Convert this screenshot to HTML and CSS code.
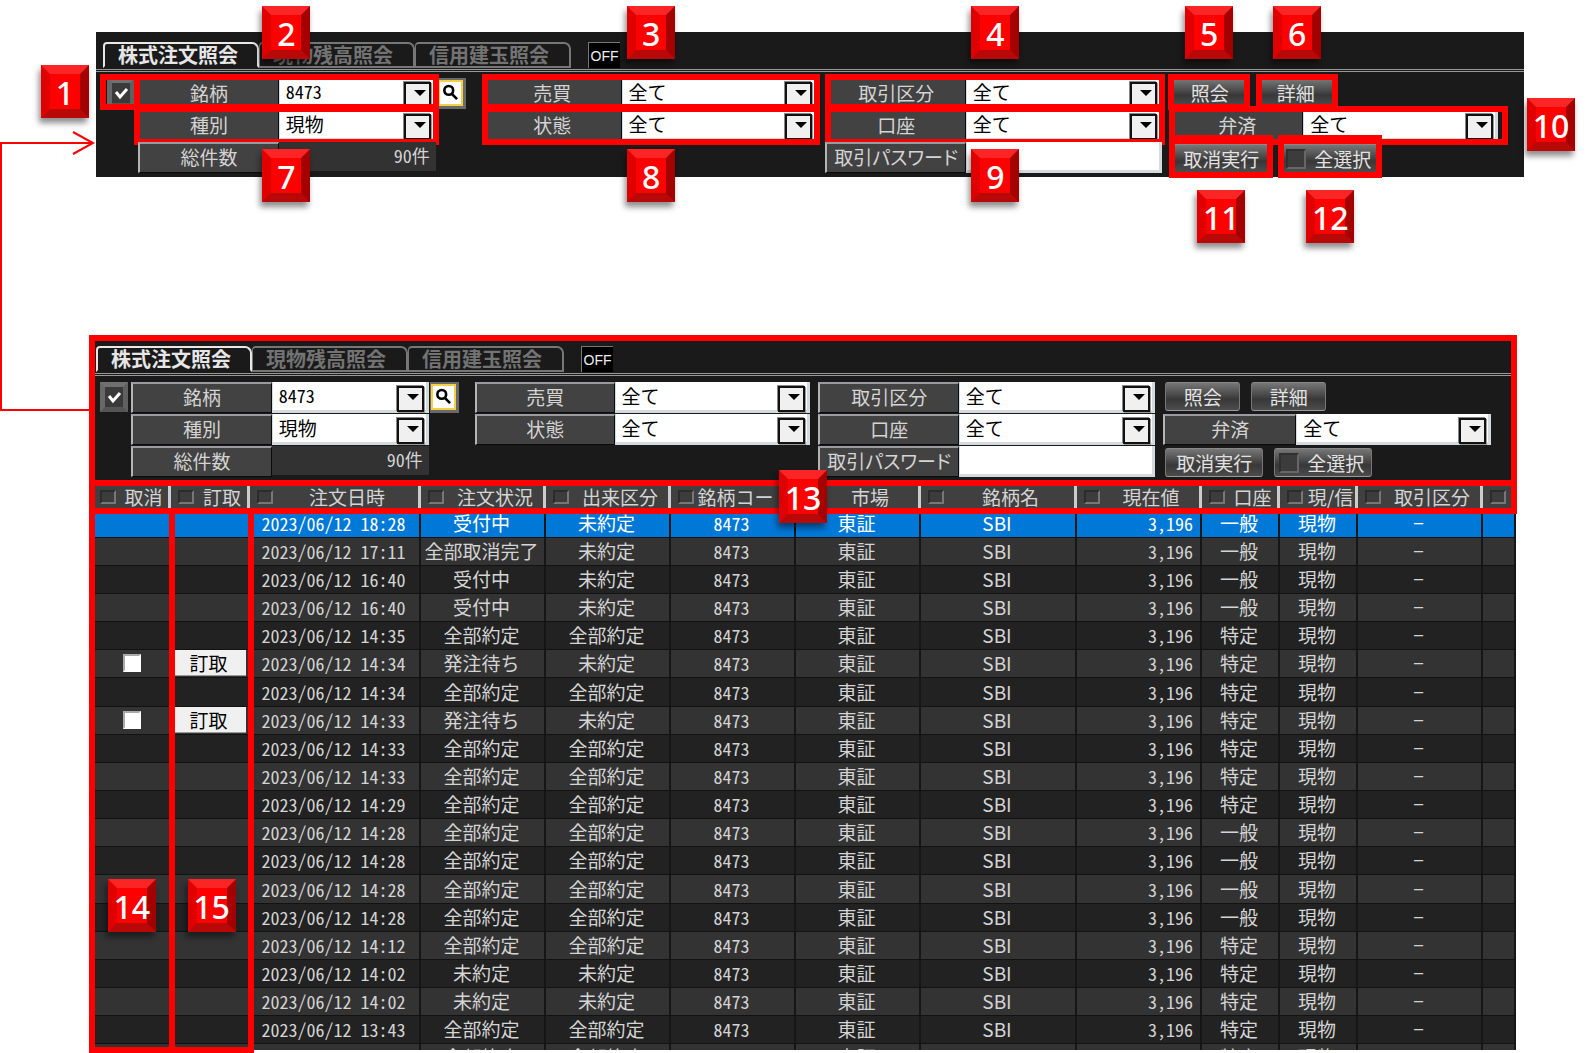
FILE: index.html
```html
<!DOCTYPE html>
<html lang="ja">
<head>
<meta charset="utf-8">
<title>株式注文照会</title>
<link rel="stylesheet" href="styles.css">
</head>
<body>
<main class="page">

<section class="panel panel-detail">
  <nav class="tabs">
    <button class="tab active">株式注文照会</button>
    <button class="tab">現物残高照会</button>
    <button class="tab">信用建玉照会</button>
    <button class="off">OFF</button>
  </nav>
  <form class="filters">
    <div class="group first">
      <div class="line">
        <span class="holder"><input class="pin" type="checkbox" checked aria-label="固定"><span class="frame wide"><b class="badge before">1</b></span></span>
        <div class="field name"><label for="a1">銘柄</label><span class="combo"><select id="a1" class="num"><option>8473</option></select></span><span class="frame"><b class="badge above">2</b></span></div>
        <button type="button" class="search" aria-label="検索"><svg viewBox="0 0 24 24"><circle cx="10" cy="9" r="5"/><path d="M13.500 13l6 6"/></svg></button>
      </div>
      <div class="field sub"><label for="a2">種別</label><span class="combo"><select id="a2"><option>現物</option></select></span><span class="frame low"><b class="badge below">7</b></span></div>
      <div class="field sub"><span class="label">総件数</span><output class="num">90件</output></div>
    </div>
    <div class="group">
      <div class="field"><label for="a3">売買</label><span class="combo"><select id="a3"><option>全て</option></select></span><span class="frame flush"><b class="badge above">3</b></span></div>
      <div class="field"><label for="a4">状態</label><span class="combo"><select id="a4"><option>全て</option></select></span><span class="frame low flush"><b class="badge below">8</b></span></div>
    </div>
    <div class="group">
      <div class="field"><label for="a5">取引区分</label><span class="combo"><select id="a5"><option>全て</option></select></span><span class="frame flush"><b class="badge above">4</b></span></div>
      <div class="field"><label for="a6">口座</label><span class="combo"><select id="a6"><option>全て</option></select></span><span class="frame low flush"><b class="badge below">9</b></span></div>
      <div class="field"><label for="a7" class="kana">取引パスワード</label><input id="a7" class="pass" type="password"></div>
    </div>
    <div class="group">
      <div class="line actions"><span class="holder"><button type="button" class="btn">照会</button><span class="frame"><b class="badge above">5</b></span></span><span class="holder"><button type="button" class="btn">詳細</button><span class="frame right"><b class="badge above">6</b></span></span></div>
      <div class="field repay"><label for="a8">弁済</label><span class="combo"><select id="a8"><option>全て</option></select></span><span class="frame low long"><b class="badge after">10</b></span></div>
      <div class="line actions"><span class="holder"><button type="button" class="btn big">取消実行</button><span class="frame tall"><b class="badge under">11</b></span></span><span class="holder"><label class="btn big all"><input type="checkbox">全選択</label><span class="frame tall"><b class="badge under">12</b></span></span></div>
    </div>
  </form>
</section>

<section class="screen">
  <div class="panel">
    <nav class="tabs">
      <button class="tab active">株式注文照会</button>
      <button class="tab">現物残高照会</button>
      <button class="tab">信用建玉照会</button>
      <button class="off">OFF</button>
    </nav>
    <form class="filters">
      <div class="group first">
        <div class="line">
          <input class="pin" type="checkbox" checked aria-label="固定">
          <div class="field name"><label for="b1">銘柄</label><span class="combo"><select id="b1" class="num"><option>8473</option></select></span></div>
          <button type="button" class="search" aria-label="検索"><svg viewBox="0 0 24 24"><circle cx="10" cy="9" r="5"/><path d="M13.500 13l6 6"/></svg></button>
        </div>
        <div class="field sub"><label for="b2">種別</label><span class="combo"><select id="b2"><option>現物</option></select></span></div>
        <div class="field sub"><span class="label">総件数</span><output class="num">90件</output></div>
      </div>
      <div class="group">
        <div class="field"><label for="b3">売買</label><span class="combo"><select id="b3"><option>全て</option></select></span></div>
        <div class="field"><label for="b4">状態</label><span class="combo"><select id="b4"><option>全て</option></select></span></div>
      </div>
      <div class="group">
        <div class="field"><label for="b5">取引区分</label><span class="combo"><select id="b5"><option>全て</option></select></span></div>
        <div class="field"><label for="b6">口座</label><span class="combo"><select id="b6"><option>全て</option></select></span></div>
        <div class="field"><label for="b7" class="kana">取引パスワード</label><input id="b7" class="pass" type="password"></div>
      </div>
      <div class="group">
        <div class="line actions"><button type="button" class="btn">照会</button><button type="button" class="btn">詳細</button></div>
        <div class="field repay"><label for="b8">弁済</label><span class="combo"><select id="b8"><option>全て</option></select></span></div>
        <div class="line actions"><button type="button" class="btn big">取消実行</button><label class="btn big all"><input type="checkbox">全選択</label></div>
      </div>
    </form>
    <span class="frame around"></span>
  </div>

  <div class="orders">
    <div class="clip">
    <table>
      <colgroup><col class="c-cancel"><col class="c-edit"><col class="c-date"><col class="c-mid"><col class="c-mid"><col class="c-mid"><col class="c-mid"><col class="c-name"><col class="c-mid"><col class="c-small"><col class="c-small"><col class="c-mid"><col class="c-rest"></colgroup>
      <thead><tr>
        <th><label><input type="checkbox"><span>取消</span></label></th>
        <th><label><input type="checkbox"><span>訂取</span></label></th>
        <th><label><input type="checkbox"><span>注文日時</span></label></th>
        <th><label><input type="checkbox"><span>注文状況</span></label></th>
        <th><label><input type="checkbox"><span>出来区分</span></label></th>
        <th><label><input type="checkbox"><span>銘柄コード</span></label></th>
        <th><label><input type="checkbox"><span>市場</span></label></th>
        <th><label><input type="checkbox"><span>銘柄名</span></label></th>
        <th><label><input type="checkbox"><span>現在値</span></label></th>
        <th><label><input type="checkbox"><span>口座</span></label></th>
        <th><label><input type="checkbox"><span>現/信</span></label></th>
        <th><label><input type="checkbox"><span>取引区分</span></label></th>
        <th><label><input type="checkbox" aria-label="次の列"></label></th>
      </tr></thead>
      <tbody>
        <tr class="selected"><td></td><td></td><td class="num">2023/06/12 18:28</td><td>受付中</td><td>未約定</td><td class="num">8473</td><td>東証</td><td>SBI</td><td class="num price">3,196</td><td>一般</td><td>現物</td><td>−</td><td></td></tr>
        <tr><td></td><td></td><td class="num">2023/06/12 17:11</td><td>全部取消完了</td><td>未約定</td><td class="num">8473</td><td>東証</td><td>SBI</td><td class="num price">3,196</td><td>一般</td><td>現物</td><td>−</td><td></td></tr>
        <tr><td></td><td></td><td class="num">2023/06/12 16:40</td><td>受付中</td><td>未約定</td><td class="num">8473</td><td>東証</td><td>SBI</td><td class="num price">3,196</td><td>一般</td><td>現物</td><td>−</td><td></td></tr>
        <tr><td></td><td></td><td class="num">2023/06/12 16:40</td><td>受付中</td><td>未約定</td><td class="num">8473</td><td>東証</td><td>SBI</td><td class="num price">3,196</td><td>一般</td><td>現物</td><td>−</td><td></td></tr>
        <tr><td></td><td></td><td class="num">2023/06/12 14:35</td><td>全部約定</td><td>全部約定</td><td class="num">8473</td><td>東証</td><td>SBI</td><td class="num price">3,196</td><td>特定</td><td>現物</td><td>−</td><td></td></tr>
        <tr><td><input class="tick" type="checkbox" aria-label="取消"></td><td><button class="edit">訂取</button></td><td class="num">2023/06/12 14:34</td><td>発注待ち</td><td>未約定</td><td class="num">8473</td><td>東証</td><td>SBI</td><td class="num price">3,196</td><td>特定</td><td>現物</td><td>−</td><td></td></tr>
        <tr><td></td><td></td><td class="num">2023/06/12 14:34</td><td>全部約定</td><td>全部約定</td><td class="num">8473</td><td>東証</td><td>SBI</td><td class="num price">3,196</td><td>特定</td><td>現物</td><td>−</td><td></td></tr>
        <tr><td><input class="tick" type="checkbox" aria-label="取消"></td><td><button class="edit">訂取</button></td><td class="num">2023/06/12 14:33</td><td>発注待ち</td><td>未約定</td><td class="num">8473</td><td>東証</td><td>SBI</td><td class="num price">3,196</td><td>特定</td><td>現物</td><td>−</td><td></td></tr>
        <tr><td></td><td></td><td class="num">2023/06/12 14:33</td><td>全部約定</td><td>全部約定</td><td class="num">8473</td><td>東証</td><td>SBI</td><td class="num price">3,196</td><td>特定</td><td>現物</td><td>−</td><td></td></tr>
        <tr><td></td><td></td><td class="num">2023/06/12 14:33</td><td>全部約定</td><td>全部約定</td><td class="num">8473</td><td>東証</td><td>SBI</td><td class="num price">3,196</td><td>特定</td><td>現物</td><td>−</td><td></td></tr>
        <tr><td></td><td></td><td class="num">2023/06/12 14:29</td><td>全部約定</td><td>全部約定</td><td class="num">8473</td><td>東証</td><td>SBI</td><td class="num price">3,196</td><td>特定</td><td>現物</td><td>−</td><td></td></tr>
        <tr><td></td><td></td><td class="num">2023/06/12 14:28</td><td>全部約定</td><td>全部約定</td><td class="num">8473</td><td>東証</td><td>SBI</td><td class="num price">3,196</td><td>一般</td><td>現物</td><td>−</td><td></td></tr>
        <tr><td></td><td></td><td class="num">2023/06/12 14:28</td><td>全部約定</td><td>全部約定</td><td class="num">8473</td><td>東証</td><td>SBI</td><td class="num price">3,196</td><td>一般</td><td>現物</td><td>−</td><td></td></tr>
        <tr><td></td><td></td><td class="num">2023/06/12 14:28</td><td>全部約定</td><td>全部約定</td><td class="num">8473</td><td>東証</td><td>SBI</td><td class="num price">3,196</td><td>一般</td><td>現物</td><td>−</td><td></td></tr>
        <tr><td></td><td></td><td class="num">2023/06/12 14:28</td><td>全部約定</td><td>全部約定</td><td class="num">8473</td><td>東証</td><td>SBI</td><td class="num price">3,196</td><td>一般</td><td>現物</td><td>−</td><td></td></tr>
        <tr><td></td><td></td><td class="num">2023/06/12 14:12</td><td>全部約定</td><td>全部約定</td><td class="num">8473</td><td>東証</td><td>SBI</td><td class="num price">3,196</td><td>特定</td><td>現物</td><td>−</td><td></td></tr>
        <tr><td></td><td></td><td class="num">2023/06/12 14:02</td><td>未約定</td><td>未約定</td><td class="num">8473</td><td>東証</td><td>SBI</td><td class="num price">3,196</td><td>特定</td><td>現物</td><td>−</td><td></td></tr>
        <tr><td></td><td></td><td class="num">2023/06/12 14:02</td><td>未約定</td><td>未約定</td><td class="num">8473</td><td>東証</td><td>SBI</td><td class="num price">3,196</td><td>特定</td><td>現物</td><td>−</td><td></td></tr>
        <tr><td></td><td></td><td class="num">2023/06/12 13:43</td><td>全部約定</td><td>全部約定</td><td class="num">8473</td><td>東証</td><td>SBI</td><td class="num price">3,196</td><td>特定</td><td>現物</td><td>−</td><td></td></tr>
        <tr><td></td><td></td><td class="num">2023/06/12 13:43</td><td>全部約定</td><td>全部約定</td><td class="num">8473</td><td>東証</td><td>SBI</td><td class="num price">3,196</td><td>特定</td><td>現物</td><td>−</td><td></td></tr>
      </tbody>
    </table>
    </div>
    <span class="frame cancel"><b class="badge column">14</b></span>
    <span class="frame edits"><b class="badge column">15</b></span>
    <span class="frame head"><b class="badge center">13</b></span>
  </div>
</section>

<svg class="connector" width="96" height="284" viewBox="0 0 96 284" fill="none" stroke="#f00" stroke-width="2" aria-hidden="true"><path d="M90 280H1V13H93M73 2L93 13L73 24"/></svg>
</main>
</body>
</html>
```
FILE: styles.css
```css
* { box-sizing: border-box; }

body {
  margin: 0;
  background: #fff;
  color: #d4d4d4;
  font-family: "Noto Sans CJK JP", "Noto Sans", sans-serif;
  font-size: 19px;
  line-height: 24px;
}

button, input, select { font: inherit; color: inherit; margin: 0; padding: 0; }

.page {
  position: relative;
  display: flex;
  flex-direction: column;
  height: 100vh;
  padding: 32px 71px 3px 89px;
  overflow: hidden;
}

.num { font-size: 18px; font-feature-settings: "hwid"; }
.kana { font-feature-settings: "palt"; }

/* Panel with tabs and search conditions */
.panel {
  position: relative;
  flex: none;
  padding-bottom: 4px;
  background: #1a1a1a;
}
.panel-detail { margin: 0 0 159px 7px; }

.tabs {
  display: flex;
  padding: 10px 7px 1px;
}
.tab {
  width: 156px;
  height: 26px;
  padding-left: 13px;
  border: 2px solid #777;
  border-left-width: 1px;
  border-radius: 4px 7px 0 0;
  background: none;
  color: #737373;
  font-size: 20px;
  font-weight: 700;
  line-height: 22px;
  text-align: left;
  white-space: nowrap;
}
.tab.active {
  border-color: #e8e8e8;
  border-left-width: 2px;
  border-bottom-color: transparent;
  color: #e6e6e6;
}
.off {
  width: 32px;
  height: 26px;
  margin-left: 17px;
  border: 0 solid #777;
  border-width: 1px 0 0 1px;
  background: #000;
  color: #eee;
  font: 14px/26px "Liberation Sans", sans-serif;
}

.filters {
  display: grid;
  grid-template-columns: 367fr 336fr 337fr 328fr;
  column-gap: 8px;
  padding: 6px 26px 0 11px;
  border-top: 3px double #999;
}
.group { display: grid; grid-template-rows: 31px 31px 31px; row-gap: 1px; }
.line { display: flex; }
.field { position: relative; display: grid; grid-template-columns: 140fr 196fr; }
.field.name { flex: 1; grid-template-columns: 141fr 157fr; margin: 0 1px 0 3px; }
.field.sub { grid-template-columns: 141fr 157fr; margin: 0 38px 0 31px; }
.field.repay { grid-template-columns: 133fr 195fr; }
.first .line { padding-right: 8px; }
.holder { position: relative; display: flex; }

.field > label, .label {
  border: 1px solid #0a0a0a;
  border-top: 2px solid #9a9aa2;
  border-left: 2px solid #b4b4b4;
  background: #424242;
  line-height: 26px;
  text-align: center;
  white-space: nowrap;
}
.combo { position: relative; display: grid; color: #000; }
.combo::before, .combo::after { content: ""; position: absolute; pointer-events: none; }
.combo::before {
  top: 4px;
  right: 5px;
  width: 23px;
  height: 22px;
  border: 2px solid #111;
  background: #f0f0f0;
  box-shadow: -1px -1px #888, 1px 1px #999;
}
.combo::after {
  top: 12px;
  right: 10px;
  border: 6px solid transparent;
  border-top-color: #000;
  border-bottom: 0;
}
select, .pass {
  appearance: none;
  width: 100%;
  height: 31px;
  padding: 0 6px;
  border: 0 solid #d5dade;
  border-width: 0 3px 3px 1px;
  border-radius: 0;
  background: #fff;
}
select.num { padding-bottom: 2px; }
output {
  height: 29px;
  padding-right: 6px;
  background: #323232;
  line-height: 27px;
  text-align: right;
}

.pin {
  appearance: none;
  width: 28px;
  height: 30px;
  border: 5px solid;
  border-color: #707070 #606060 #555 #686868;
  background: #3a3a3a url("data:image/svg+xml,%3Csvg xmlns='http://www.w3.org/2000/svg' viewBox='0 0 18 20'%3E%3Cpath d='M4 9l4 5 7-8' fill='none' stroke='white' stroke-width='3'/%3E%3C/svg%3E") center / 18px 20px no-repeat;
}
.search {
  width: 29px;
  height: 31px;
  padding: 0;
  border: 2px solid #6a6a6a;
  border-width: 2px 3px 3px 1px;
  background: #fff;
}
.search svg {
  display: block;
  width: 25px;
  height: 26px;
  border: 2px solid #f6cf45;
  fill: none;
  stroke: #000;
  stroke-width: 3;
}

.actions { gap: 11px; padding-left: 2px; }
.btn {
  display: block;
  width: 75px;
  height: 29px;
  border: 1px solid;
  border-color: #888 #777 #999 #777;
  border-radius: 3px;
  background: linear-gradient(#777, #383838 60%, #4c4c4c);
  color: #e2e2e2;
  line-height: 24px;
  text-align: center;
}
.big { width: 98px; margin-top: 2px; }
.all { display: flex; align-items: center; gap: 8px; padding-left: 4px; }
.all input {
  appearance: none;
  width: 20px;
  height: 20px;
  border: 2px solid #575757;
  border-color: #303030 #666 #666 #303030;
  background: #3c3c3c;
}

/* Order list */
.screen {
  display: flex;
  flex: 1;
  flex-direction: column;
  min-height: 0;
  margin-right: 7px;
}
.orders { position: relative; flex: 1; min-height: 0; }
.clip { height: 100%; margin-right: 1px; overflow: hidden; background: #222; }
table { width: 100%; table-layout: fixed; border-collapse: separate; border-spacing: 0; }
.c-cancel { width: 82px; }
.c-edit { width: 79px; }
.c-date { width: 171px; }
.c-mid { width: 125px; }
.c-name { width: 156px; }
.c-small { width: 78px; }
.c-rest { width: 33px; }
th {
  height: 29px;
  padding: 2px 0 0 7px;
  border-right: 3px solid #ccc;
  background: #404040;
  font-weight: 400;
}
th:first-child { padding-left: 11px; }
th:last-child { border-right: 0; }
th label { display: flex; align-items: center; gap: 3px; }
th span { flex: 1; white-space: nowrap; }
th input {
  appearance: none;
  flex: none;
  width: 16px;
  height: 14px;
  border: 2px solid;
  border-color: #2c2c2c #777 #777 #2c2c2c;
  background: #3c3c3c;
}
td {
  height: 28px;
  padding: 0 2px 1px 0;
  border-right: 2px solid #161616;
  border-bottom: 1px solid #121212;
  background: #222;
  line-height: 24px;
  text-align: center;
  white-space: nowrap;
}
/* The list is 28px to a row, with one spare pixel for every seven rows */
tr:nth-child(7n) td { height: 29px; }
tr:nth-child(even) td { background: #333; }
tr.selected td { background: #0078d8; color: #fff; }
td.price { padding-right: 7px; text-align: right; }
.tick {
  appearance: none;
  display: block;
  width: 18px;
  height: 18px;
  margin: 0 0 0 34px;
  border: 2px solid;
  border-color: #aaa #fff #fff #aaa;
  background: #fff;
}
.edit {
  display: block;
  width: 100%;
  height: 26px;
  border: 0;
  border-bottom: 1px solid #999;
  background: #f0f0f0;
  color: #000;
  line-height: 24px;
}

/* Numbered callouts */
.frame {
  position: absolute;
  inset: -4px -3px -1px -4px;
  border: 6px solid #f00;
  pointer-events: none;
}
.frame.flush { left: 0; }
.frame.right { right: -5px; left: -2px; }
.frame.low { bottom: -4px; }
.frame.wide { right: -5px; left: -7px; }
.frame.long { right: -10px; left: -1px; }
.frame.tall { inset: -7px -3px -5px; }
.frame.around { inset: -1px 0 -5px; }
.frame.head { inset: -1px 0 auto; height: 34px; }
.frame.cancel { inset: 27px auto -3px 0; width: 6%; }
.frame.edits { inset: 27px auto -3px 80px; width: 85px; }

.badge {
  position: absolute;
  z-index: 3;
  width: 48px;
  height: 53px;
  border: 9px solid;
  border-color: #fb2525 #a50000 #b80808 #e00000;
  background: #f00;
  box-shadow: -2px 5px 6px rgba(0, 0, 0, .45);
  color: #fff;
  font: 500 32px/37px "Noto Sans", sans-serif;
  display: flex;
  justify-content: center;
}
.badge.above { bottom: calc(100% + 21px); left: calc(50% - 24px); }
.badge.below { top: calc(100% + 10px); left: calc(50% - 24px); }
.badge.under { top: calc(100% + 18px); left: calc(50% - 24px); }
.badge.before { top: -15px; right: calc(100% + 17px); }
.badge.after { top: -14px; left: calc(100% + 25px); }
.badge.center { top: -16px; left: calc(50% - 24px); }
.badge.column { bottom: 115px; left: calc(50% - 24px); }

.connector { position: absolute; top: 130px; left: 0; }
```
